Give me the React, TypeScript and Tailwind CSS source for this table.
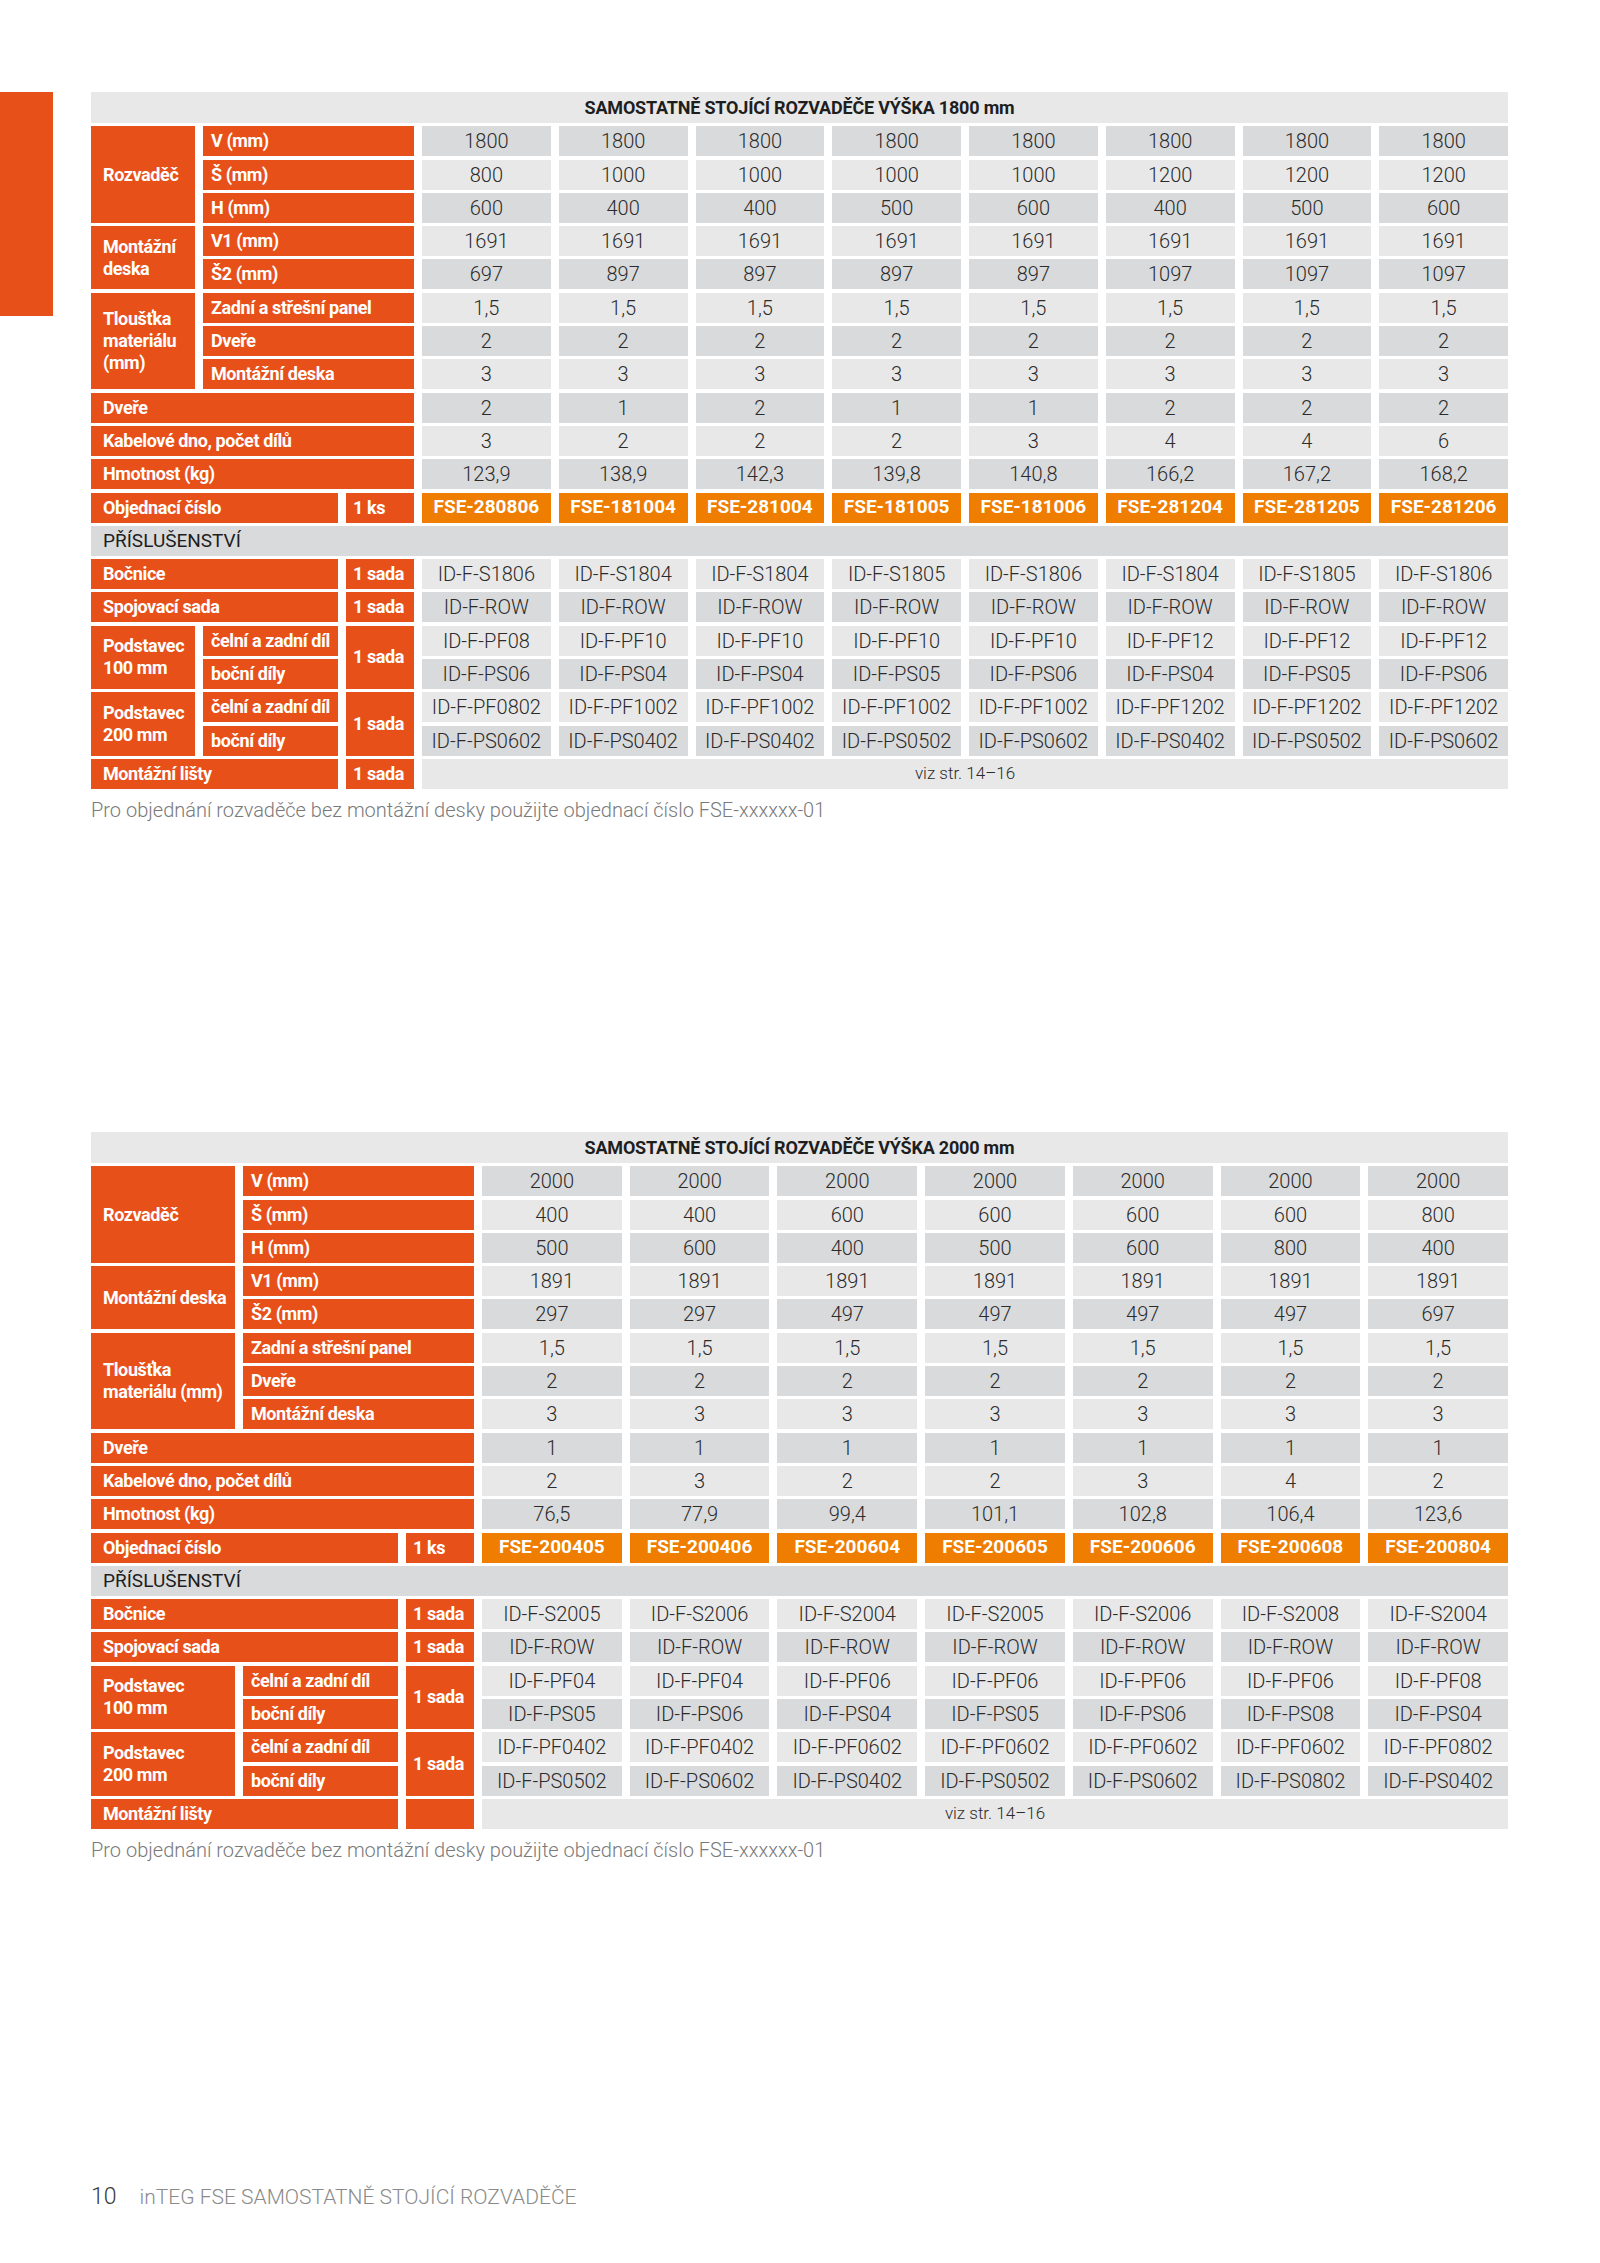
import { ReactNode } from "react";

type Shade = "dark" | "light";

type TableData = {
  height: string;
  sirka: string[];
  hloubka: string[];
  v1: string;
  s2: string[];
  dvere: string[];
  kabel: string[];
  hmotnost: string[];
  objednaci: string[];
  bocnice: string[];
  pf100: string[];
  ps100: string[];
  pf200: string[];
  ps200: string[];
};

const table1800: TableData = {
  height: "1800",
  sirka: ["800", "1000", "1000", "1000", "1000", "1200", "1200", "1200"],
  hloubka: ["600", "400", "400", "500", "600", "400", "500", "600"],
  v1: "1691",
  s2: ["697", "897", "897", "897", "897", "1097", "1097", "1097"],
  dvere: ["2", "1", "2", "1", "1", "2", "2", "2"],
  kabel: ["3", "2", "2", "2", "3", "4", "4", "6"],
  hmotnost: ["123,9", "138,9", "142,3", "139,8", "140,8", "166,2", "167,2", "168,2"],
  objednaci: ["FSE-280806", "FSE-181004", "FSE-281004", "FSE-181005", "FSE-181006", "FSE-281204", "FSE-281205", "FSE-281206"],
  bocnice: ["ID-F-S1806", "ID-F-S1804", "ID-F-S1804", "ID-F-S1805", "ID-F-S1806", "ID-F-S1804", "ID-F-S1805", "ID-F-S1806"],
  pf100: ["ID-F-PF08", "ID-F-PF10", "ID-F-PF10", "ID-F-PF10", "ID-F-PF10", "ID-F-PF12", "ID-F-PF12", "ID-F-PF12"],
  ps100: ["ID-F-PS06", "ID-F-PS04", "ID-F-PS04", "ID-F-PS05", "ID-F-PS06", "ID-F-PS04", "ID-F-PS05", "ID-F-PS06"],
  pf200: ["ID-F-PF0802", "ID-F-PF1002", "ID-F-PF1002", "ID-F-PF1002", "ID-F-PF1002", "ID-F-PF1202", "ID-F-PF1202", "ID-F-PF1202"],
  ps200: ["ID-F-PS0602", "ID-F-PS0402", "ID-F-PS0402", "ID-F-PS0502", "ID-F-PS0602", "ID-F-PS0402", "ID-F-PS0502", "ID-F-PS0602"],
};

const table2000: TableData = {
  height: "2000",
  sirka: ["400", "400", "600", "600", "600", "600", "800"],
  hloubka: ["500", "600", "400", "500", "600", "800", "400"],
  v1: "1891",
  s2: ["297", "297", "497", "497", "497", "497", "697"],
  dvere: ["1", "1", "1", "1", "1", "1", "1"],
  kabel: ["2", "3", "2", "2", "3", "4", "2"],
  hmotnost: ["76,5", "77,9", "99,4", "101,1", "102,8", "106,4", "123,6"],
  objednaci: ["FSE-200405", "FSE-200406", "FSE-200604", "FSE-200605", "FSE-200606", "FSE-200608", "FSE-200804"],
  bocnice: ["ID-F-S2005", "ID-F-S2006", "ID-F-S2004", "ID-F-S2005", "ID-F-S2006", "ID-F-S2008", "ID-F-S2004"],
  pf100: ["ID-F-PF04", "ID-F-PF04", "ID-F-PF06", "ID-F-PF06", "ID-F-PF06", "ID-F-PF06", "ID-F-PF08"],
  ps100: ["ID-F-PS05", "ID-F-PS06", "ID-F-PS04", "ID-F-PS05", "ID-F-PS06", "ID-F-PS08", "ID-F-PS04"],
  pf200: ["ID-F-PF0402", "ID-F-PF0402", "ID-F-PF0602", "ID-F-PF0602", "ID-F-PF0602", "ID-F-PF0602", "ID-F-PF0802"],
  ps200: ["ID-F-PS0502", "ID-F-PS0602", "ID-F-PS0402", "ID-F-PS0502", "ID-F-PS0602", "ID-F-PS0802", "ID-F-PS0402"],
};

// orange label cell
function Lbl({ className = "", children }: { className?: string; children?: ReactNode }) {
  return (
    <div
      className={`flex items-center bg-[#e8501a] text-white font-bold text-[18px] leading-[22px] tracking-[-0.4px] whitespace-nowrap ${className}`}
    >
      {children}
    </div>
  );
}

function Cells({ values, shade }: { values: string[]; shade: Shade }) {
  return (
    <>
      {values.map((v, i) => (
        <div
          key={i}
          className={`flex items-center justify-center text-[20px] font-light text-[#2b2b2b] ${
            shade === "dark" ? "bg-[#d9dadb]" : "bg-[#e8e8e8]"
          }`}
        >
          {v}
        </div>
      ))}
    </>
  );
}

function Table({ data, wide }: { data: TableData; wide: boolean }) {
  const n = data.sirka.length;
  const same = (v: string) => Array(n).fill(v);
  const grid = wide
    ? "grid-cols-[144px_155px_68px_repeat(7,minmax(0,1fr))]"
    : "grid-cols-[104px_135px_68px_repeat(8,minmax(0,1fr))]";
  const spanData = wide ? "col-span-7" : "col-span-8";

  return (
    <div className={`grid ${grid} grid-rows-[31px_repeat(20,30px)] gap-x-[8px] gap-y-[3.3px]`}>
      <div className="col-span-full flex items-center justify-center bg-[#e8e8e8] text-[18px] font-bold tracking-[-0.2px] text-[#1e1e1e]">
        SAMOSTATNĚ STOJÍCÍ ROZVADĚČE VÝŠKA {data.height} mm
      </div>

      <Lbl className="row-span-3 pl-[12px]">Rozvaděč</Lbl>
      <Lbl className="col-span-2 pl-[8px]">V (mm)</Lbl>
      <Cells values={same(data.height)} shade="dark" />
      <Lbl className="col-span-2 pl-[8px]">Š (mm)</Lbl>
      <Cells values={data.sirka} shade="light" />
      <Lbl className="col-span-2 pl-[8px]">H (mm)</Lbl>
      <Cells values={data.hloubka} shade="dark" />

      <Lbl className="row-span-2 pl-[12px]">
        {wide ? "Montážní deska" : (<span>Montážní<br />deska</span>)}
      </Lbl>
      <Lbl className="col-span-2 pl-[8px]">V1 (mm)</Lbl>
      <Cells values={same(data.v1)} shade="light" />
      <Lbl className="col-span-2 pl-[8px]">Š2 (mm)</Lbl>
      <Cells values={data.s2} shade="dark" />

      <Lbl className="row-span-3 pl-[12px]">
        {wide ? (
          <span>Tloušťka<br />materiálu (mm)</span>
        ) : (
          <span>Tloušťka<br />materiálu<br />(mm)</span>
        )}
      </Lbl>
      <Lbl className="col-span-2 pl-[8px]">Zadní a střešní panel</Lbl>
      <Cells values={same("1,5")} shade="light" />
      <Lbl className="col-span-2 pl-[8px]">Dveře</Lbl>
      <Cells values={same("2")} shade="dark" />
      <Lbl className="col-span-2 pl-[8px]">Montážní deska</Lbl>
      <Cells values={same("3")} shade="light" />

      <Lbl className="col-span-3 pl-[12px]">Dveře</Lbl>
      <Cells values={data.dvere} shade="dark" />
      <Lbl className="col-span-3 pl-[12px]">Kabelové dno, počet dílů</Lbl>
      <Cells values={data.kabel} shade="light" />
      <Lbl className="col-span-3 pl-[12px]">Hmotnost (kg)</Lbl>
      <Cells values={data.hmotnost} shade="dark" />

      <Lbl className="col-span-2 pl-[12px]">Objednací číslo</Lbl>
      <Lbl className="pl-[7px]">1 ks</Lbl>
      {data.objednaci.map((v) => (
        <div
          key={v}
          className="flex items-center justify-center bg-[#ef7d00] text-[19px] font-bold text-white"
        >
          {v}
        </div>
      ))}

      <div className="col-span-full flex items-center bg-[#d9dadb] pl-[12px] text-[19px] text-[#1e1e1e]">
        PŘÍSLUŠENSTVÍ
      </div>

      <Lbl className="col-span-2 pl-[12px]">Bočnice</Lbl>
      <Lbl className="pl-[7px]">1 sada</Lbl>
      <Cells values={data.bocnice} shade="light" />
      <Lbl className="col-span-2 pl-[12px]">Spojovací sada</Lbl>
      <Lbl className="pl-[7px]">1 sada</Lbl>
      <Cells values={same("ID-F-ROW")} shade="dark" />

      <Lbl className="row-span-2 pl-[12px]">
        <span>Podstavec<br />100 mm</span>
      </Lbl>
      <Lbl className="pl-[8px]">čelní a zadní díl</Lbl>
      <Lbl className="row-span-2 pl-[7px]">1 sada</Lbl>
      <Cells values={data.pf100} shade="light" />
      <Lbl className="pl-[8px]">boční díly</Lbl>
      <Cells values={data.ps100} shade="dark" />

      <Lbl className="row-span-2 pl-[12px]">
        <span>Podstavec<br />200 mm</span>
      </Lbl>
      <Lbl className="pl-[8px]">čelní a zadní díl</Lbl>
      <Lbl className="row-span-2 pl-[7px]">1 sada</Lbl>
      <Cells values={data.pf200} shade="light" />
      <Lbl className="pl-[8px]">boční díly</Lbl>
      <Cells values={data.ps200} shade="dark" />

      <Lbl className="col-span-2 pl-[12px]">Montážní lišty</Lbl>
      <Lbl className="pl-[7px]">{wide ? "" : "1 sada"}</Lbl>
      <div
        className={`${spanData} flex items-center justify-center bg-[#e8e8e8] text-[17px] font-light text-[#2b2b2b]`}
      >
        viz str. 14–16
      </div>
    </div>
  );
}

function Note() {
  return (
    <p className="mt-[10px] text-[20px] leading-[22px] font-light text-[#7a7a7a]">
      Pro objednání rozvaděče bez montážní desky použijte objednací číslo FSE-xxxxxx-01
    </p>
  );
}

export default function App() {
  return (
    <div className="w-[1600px] h-[2263px] bg-white font-['Roboto',sans-serif] flex pt-[92px]">
      <div className="w-[53px] h-[224px] shrink-0 bg-[#e8501a]" />
      <div className="ml-[38px] w-[1417px] flex flex-col">
        <Table data={table1800} wide={false} />
        <Note />
        <div className="mt-[311px]">
          <Table data={table2000} wide={true} />
        </div>
        <Note />
        <div className="mt-[322px] flex items-baseline gap-[23px]">
          <span className="text-[23px] leading-[28px] font-light text-[#3a3a3a]">10</span>
          <span className="text-[21px] leading-[28px] font-light text-[#8a8a8a]">
            inTEG FSE SAMOSTATNĚ STOJÍCÍ ROZVADĚČE
          </span>
        </div>
      </div>
    </div>
  );
}
